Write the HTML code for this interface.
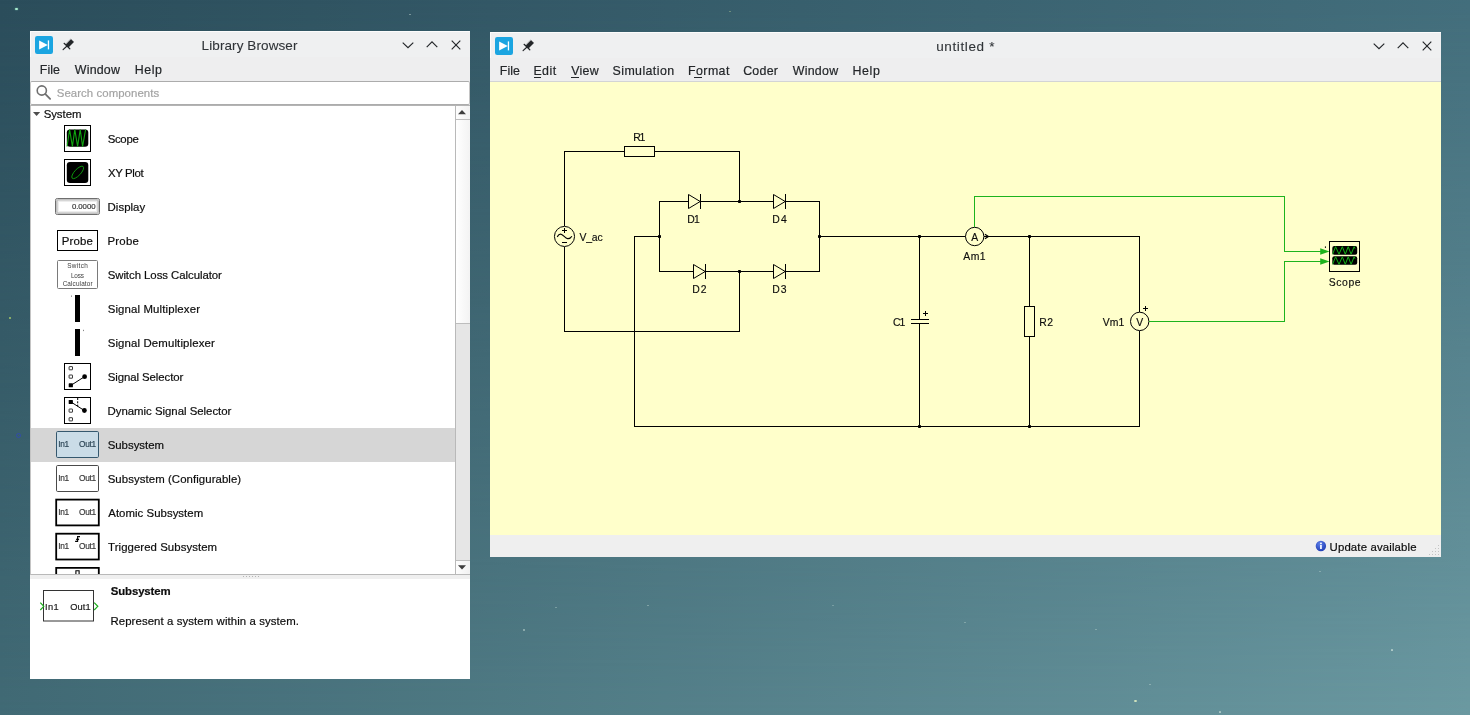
<!DOCTYPE html>
<html lang="en">
<head>
<meta charset="utf-8">
<title>PLECS - untitled</title>
<style>
html,body{margin:0;padding:0;}
body{width:1470px;height:715px;overflow:hidden;position:relative;font-family:"Liberation Sans",sans-serif;
  background:linear-gradient(to right,#2b4d5b,#436e7c);}
#bg2{position:absolute;left:0;top:0;width:1470px;height:715px;background:linear-gradient(to right,#416a75,#6b99a1);-webkit-mask-image:linear-gradient(to bottom,rgba(0,0,0,0),#000);mask-image:linear-gradient(to bottom,rgba(0,0,0,0),#000);}
.abs{position:absolute;}
.win{position:absolute;background:#eff0f1;}
.t{position:absolute;white-space:pre;line-height:20px;height:20px;font-family:"Liberation Sans",sans-serif;-webkit-text-stroke:0.2px currentColor;}
#texts{position:absolute;left:0;top:0;width:1470px;height:715px;pointer-events:none;will-change:transform;}
svg{position:absolute;left:0;top:0;overflow:visible;}
.star{position:absolute;border-radius:50%;background:#cfe3dc;}
</style>
</head>
<body>
<div id="bg2"></div>
<!-- desktop stars -->
<div class="star" style="left:15px;top:8px;width:3px;height:2.4px;background:#a9ecd0;box-shadow:0 0 1.5px #7fc9b0"></div>
<div class="star" style="left:409px;top:14px;width:2px;height:1.4px;opacity:.55"></div>
<div class="star" style="left:729px;top:11px;width:2px;height:1.4px;opacity:.45;background:#c8e0a0"></div>
<div class="star" style="left:9px;top:317px;width:2.4px;height:2.4px;opacity:.85;background:#b7dc6a"></div>
<div class="star" style="left:16px;top:433px;width:3px;height:3px;background:transparent;border:1px solid #2f49b8;opacity:.8"></div>
<div class="star" style="left:523px;top:629px;width:2px;height:1.6px;opacity:.6"></div>
<div class="star" style="left:555px;top:607px;width:1.6px;height:1.4px;opacity:.4"></div>
<div class="star" style="left:647px;top:605px;width:1.6px;height:1.4px;opacity:.45"></div>
<div class="star" style="left:832px;top:605px;width:1.6px;height:1.4px;opacity:.35"></div>
<div class="star" style="left:964px;top:622px;width:1.6px;height:1.4px;opacity:.4"></div>
<div class="star" style="left:1095px;top:629px;width:1.6px;height:1.4px;opacity:.4"></div>
<div class="star" style="left:1134px;top:700px;width:2.6px;height:2px;opacity:.85;background:#e4f2c4"></div>
<div class="star" style="left:1149px;top:684px;width:1.6px;height:1.4px;opacity:.45"></div>
<div class="star" style="left:1219px;top:711px;width:2.4px;height:2px;opacity:.7"></div>
<div class="star" style="left:1319px;top:571px;width:1.6px;height:1.4px;opacity:.4"></div>
<div class="star" style="left:1391px;top:649px;width:2.4px;height:2px;opacity:.75"></div>

<!-- ================= Library Browser window ================= -->
<div class="win" id="lib" style="left:30px;top:31px;width:440px;height:648px;">
  <div class="abs" id="lib-title" style="left:0;top:0;width:440px;height:26px;box-shadow:inset 0 1px 0 #fcfcfc,inset 1px 0 0 #fbfbfb;"></div>
  <div class="abs" id="lib-menu" style="left:0;top:26px;width:440px;height:24px;background:#eeeeef;"></div>
  <div class="abs" id="lib-search" style="left:0;top:50px;width:438px;height:22px;background:#fff;border:1px solid #acacac;border-left-color:#c4c4c4;border-right-color:#c4c4c4;border-radius:2px;"></div>
  <div class="abs" id="lib-tree" style="left:0;top:74px;width:440px;height:470px;background:#fff;border-left:1px solid #c4c4c4;border-top:1px solid #b4b4b4;border-bottom:1px solid #b9b9b9;box-sizing:border-box;overflow:hidden;">
  </div>
  <div class="abs" id="lib-sel" style="left:1px;top:397px;width:424px;height:34px;background:#d6d6d6;"></div>
  <!-- scrollbar -->
  <div class="abs" id="lib-sb" style="left:425px;top:75px;width:15px;height:468px;background:#e6e6e6;border-left:1px solid #b9b9b9;box-sizing:border-box;">
    <div class="abs" style="left:0;top:0;width:14px;height:13px;background:linear-gradient(90deg,#fdfdfd,#f1f1f1);border-bottom:1px solid #bdbdbd;"></div>
    <div class="abs" style="left:0;top:14px;width:14px;height:203px;background:linear-gradient(90deg,#ffffff,#f3f3f3);border-bottom:1px solid #bdbdbd;"></div>
    <div class="abs" style="left:0;top:454px;width:14px;height:13px;background:linear-gradient(90deg,#fdfdfd,#f1f1f1);border-top:1px solid #bdbdbd;"></div>
  </div>
  <div class="abs" id="lib-split" style="left:0;top:544px;width:440px;height:4px;background:#efefef;"></div>
  <div class="abs" id="lib-desc" style="left:0;top:548px;width:440px;height:100px;background:#fff;"></div>
</div>

<!-- ================= Model window ================= -->
<div class="win" id="mdl" style="left:490px;top:32px;width:951px;height:525px;">
  <div class="abs" id="mdl-title" style="left:0;top:0;width:951px;height:26px;box-shadow:inset 0 1px 0 #fcfcfc,inset 1px 0 0 #fbfbfb;"></div>
  <div class="abs" id="mdl-menu" style="left:0;top:26px;width:951px;height:23px;border-bottom:1px solid #d3d4d5;background:#eeeeef;"></div>
  <div class="abs" id="mdl-canvas" style="left:0;top:50px;width:951px;height:453px;background:#ffffcb;"></div>
  <div class="abs" id="mdl-status" style="left:0;top:503px;width:951px;height:22px;background:#efefef;"></div>
</div>

<svg width="1470" height="715" viewBox="0 0 1470 715">
<defs>
  <g id="appicon">
    <rect x="0" y="0" width="18" height="18" rx="2.2" fill="#1ba5e1"/>
    <path d="M4.1 4.6 L12.8 9 L4.1 13.4 Z" fill="#fff"/>
    <rect x="12.8" y="4.4" width="1.3" height="9" fill="#fff"/>
  </g>
  <g id="pin" fill="none" stroke="#232629" stroke-width="1.2" stroke-linecap="round">
    <!-- local coords: origin = icon centre -->
    <path d="M-1.3 1.2 L-5.2 4.8"/>
    <path d="M-4.2 -1.5 L1.5 4"/>
    <path d="M2.7 -5.6 L5.5 -2.8 L0.3 2.4 L-2.5 -0.4 Z" fill="#232629" stroke-width="0.3" stroke-linejoin="round"/>
  </g>
  <g id="wctl" fill="none" stroke="#232629" stroke-width="1.15">
    <!-- origin = centre of the minimise chevron -->
    <path d="M-5.3 -2.4 L0 2.7 L5.3 -2.4"/>
    <path d="M18.7 2.1 L24 -3.1 L29.3 2.1"/>
    <path d="M43.7 -4.3 L52.3 4.3 M52.3 -4.3 L43.7 4.3"/>
  </g>
  <g id="sbar-up"><path d="M0 4 L4 0 L8 4 Z" fill="#3c3c3c"/></g>
</defs>

<!-- ===== Library Browser chrome ===== -->
<use href="#appicon" x="35" y="36"/>
<use href="#pin" x="68.3" y="44.8"/>
<use href="#wctl" x="408" y="45"/>
<!-- search magnifier -->
<g fill="none" stroke="#707070" stroke-linecap="round">
  <circle cx="41.8" cy="90.5" r="4.6" stroke-width="1.6"/>
  <path d="M45.4 94.2 L50.1 98.9" stroke-width="1.8"/>
</g>
<!-- tree arrow -->
<path d="M33 112 L40.2 112 L36.6 116 Z" fill="#4d4d4d"/>
<!-- scrollbar arrows -->
<path d="M458 114.2 L462 110 L466 114.2 Z" fill="#3c3c3c"/>
<path d="M458 565.2 L466 565.2 L462 569.4 Z" fill="#3c3c3c"/>
<!-- splitter dots -->
<g fill="#b5b5b5">
  <rect x="243" y="576" width="1" height="1"/><rect x="246" y="576" width="1" height="1"/><rect x="249" y="576" width="1" height="1"/>
  <rect x="252" y="576" width="1" height="1"/><rect x="255" y="576" width="1" height="1"/><rect x="258" y="576" width="1" height="1"/>
</g>

<!-- ===== Library icons ===== -->
<!-- Scope -->
<rect x="64.5" y="125.5" width="26" height="26" fill="#fff" stroke="#000" stroke-width="1"/>
<rect x="66.8" y="129.4" width="21.5" height="17.3" rx="3.2" fill="#000"/>
<path d="M67 146.5 L69.6 129.7 L72.4 146.4 L74.8 129.7 L77.6 146.4 L80.2 129.7 L82.6 146.4 L85.6 129.5" fill="none" stroke="#10a410" stroke-width="1.1" stroke-linejoin="round"/>
<!-- XY Plot -->
<rect x="64.5" y="159.5" width="26" height="26" fill="#fff" stroke="#000" stroke-width="1"/>
<rect x="66.8" y="162" width="21.5" height="21" rx="3.2" fill="#000"/>
<ellipse cx="77.7" cy="172.4" rx="8" ry="3.1" transform="rotate(-47 77.7 172.4)" fill="none" stroke="#0c9a0c" stroke-width="0.9"/>
<!-- Display -->
<rect x="55.5" y="198.5" width="44" height="16" rx="1.8" fill="#fff" stroke="#6e6e6e" stroke-width="1"/>
<rect x="56.9" y="199.9" width="41.2" height="13.2" rx="1" fill="none" stroke="#c2c2c2" stroke-width="1.8"/>
<rect x="58.3" y="201.3" width="38.4" height="10.4" rx=".6" fill="none" stroke="#e9e9e9" stroke-width="1"/>
<!-- Probe -->
<rect x="57.5" y="230.5" width="40" height="20" fill="#fff" stroke="#000" stroke-width="1"/>
<!-- Switch loss calculator -->
<rect x="57.5" y="260.5" width="40" height="28" rx="1" fill="#fff" stroke="#7a7a7a" stroke-width="1"/>
<!-- mux / demux -->
<rect x="75" y="295" width="5" height="27" fill="#000"/>
<rect x="71" y="295.5" width="0.7" height="1.3" fill="#555"/>
<rect x="75" y="329" width="5" height="27" fill="#000"/>
<rect x="83.2" y="329.8" width="0.7" height="1.3" fill="#555"/>
<!-- Signal selector -->
<rect x="64.5" y="363.5" width="26" height="26" fill="#fff" stroke="#000" stroke-width="1"/>
<rect x="69.1" y="366.6" width="3.4" height="3.2" rx=".3" fill="#fff" stroke="#222" stroke-width=".9"/>
<rect x="69.1" y="375" width="3.4" height="3.2" rx=".3" fill="#fff" stroke="#222" stroke-width=".9"/>
<rect x="68.7" y="383.3" width="4.2" height="4" rx=".6" fill="#000"/>
<circle cx="84.6" cy="376.7" r="2.4" fill="#000"/>
<path d="M71 385.3 L84.5 376.7" stroke="#000" stroke-width="1" fill="none"/>
<!-- Dynamic signal selector -->
<rect x="64.5" y="397.5" width="26" height="26" fill="#fff" stroke="#000" stroke-width="1"/>
<rect x="68.7" y="400" width="4.2" height="4" rx=".6" fill="#000"/>
<rect x="69.1" y="409" width="3.4" height="3.2" rx=".3" fill="#fff" stroke="#222" stroke-width=".9"/>
<rect x="69.1" y="417.7" width="3.4" height="3.2" rx=".3" fill="#fff" stroke="#222" stroke-width=".9"/>
<circle cx="84.4" cy="410.5" r="2.4" fill="#000"/>
<path d="M71 402 L84.3 410.5" stroke="#000" stroke-width="1" fill="none"/>
<path d="M77.7 398 L77.7 406.5" stroke="#000" stroke-width="1" stroke-dasharray="2 1.3" fill="none"/>
<!-- Subsystem (selected) -->
<rect x="56.5" y="431.5" width="42" height="26" rx="1.2" fill="#cadce7" stroke="#35586e" stroke-width="1"/>
<!-- Subsystem (Configurable) -->
<rect x="56.5" y="465.5" width="42" height="26" rx="1.2" fill="#fff" stroke="#4a4a4a" stroke-width="1"/>
<!-- Atomic -->
<rect x="56.2" y="499.6" width="42.6" height="25.8" fill="#fff" stroke="#000" stroke-width="1.8"/>
<!-- Triggered -->
<rect x="56.2" y="533.7" width="42.6" height="25.8" fill="#fff" stroke="#000" stroke-width="1.8"/>
<path d="M75.1 541.4 L77.6 541.4 L77.6 536.6 L80 536.6 M76.3 539.9 L77.6 538.3 L78.9 539.9" fill="none" stroke="#000" stroke-width="1.1"/>
<!-- Enabled (partially visible) -->
<path d="M56.2 574 L56.2 567.8 L98.8 567.8 L98.8 574" fill="#fff" stroke="#000" stroke-width="1.8"/>
<path d="M75.9 574 L75.9 570.8 L79.1 570.8 L79.1 574" fill="none" stroke="#000" stroke-width="1.1"/>

<!-- description preview -->
<rect x="43.5" y="590.5" width="50" height="30.5" fill="#fff" stroke="#333" stroke-width="1"/>
<path d="M40.3 602.6 L43.8 606.3 L40.3 610" fill="none" stroke="#1cae1c" stroke-width="1.2"/>
<path d="M94.2 602.6 L97.8 606.3 L94.2 610" fill="none" stroke="#1cae1c" stroke-width="1.2"/>

<!-- ===== Model window chrome ===== -->
<use href="#appicon" x="495" y="37"/>
<use href="#pin" x="528.3" y="45.8"/>
<use href="#wctl" x="1379" y="46"/>
<!-- menu accelerators -->
<g stroke="#232629" stroke-width="1" shape-rendering="crispEdges">
  <path d="M534.2 77.5 H540.8 M571.2 77.5 H578.8 M694.4 77.5 H701.6"/>
</g>
<!-- status bar -->
<defs>
  <radialGradient id="infog" cx="40%" cy="30%" r="75%"><stop offset="0" stop-color="#5d7fe8"/><stop offset="1" stop-color="#1f3cb4"/></radialGradient>
</defs>
<circle cx="1320.9" cy="546" r="5.2" fill="url(#infog)"/>
<rect x="1320.1" y="545" width="1.7" height="4" fill="#fff"/>
<rect x="1320.1" y="542.6" width="1.7" height="1.6" fill="#fff"/>
<g fill="#c4c4c4">
  <rect x="1438" y="545" width="1" height="1"/>
  <rect x="1435" y="548" width="1" height="1"/><rect x="1438" y="548" width="1" height="1"/>
  <rect x="1432" y="551" width="1" height="1"/><rect x="1435" y="551" width="1" height="1"/><rect x="1438" y="551" width="1" height="1"/>
  <rect x="1429" y="554" width="1" height="1"/><rect x="1432" y="554" width="1" height="1"/><rect x="1435" y="554" width="1" height="1"/><rect x="1438" y="554" width="1" height="1"/>
</g>

<!-- ===== Circuit ===== -->
<g fill="none" stroke="#000" stroke-width="1" shape-rendering="crispEdges">
  <!-- source loop -->
  <path d="M564.5 226 V151.5 H624.5"/>
  <path d="M654.5 151.5 H739.5 V201.5"/>
  <path d="M564.5 247 V331.5 H739.5 V271.5"/>
  <!-- bridge -->
  <path d="M659.5 201.5 H819.5 V271.5 H659.5 Z"/>
  <!-- negative rail -->
  <path d="M659.5 236.5 H634.5 V426.5 H1139.5 V331"/>
  <!-- positive rail -->
  <path d="M819.5 236.5 H965.5 M984 236.5 H1139.5 V312"/>
  <!-- C1 branch -->
  <path d="M919.5 236.5 V319.5 M919.5 323.5 V426.5"/>
  <path d="M911 319.5 H928.5 M911 323.5 H928.5"/>
  <path d="M923 313.5 H928 M925.5 311 V316"/>
  <!-- R2 branch -->
  <path d="M1029.5 236.5 V306.5 M1029.5 336.5 V426.5"/>
  <!-- resistors -->
  <rect x="624.5" y="146.5" width="30" height="10" fill="#ffffcb"/>
  <rect x="1024.5" y="306.5" width="10" height="30" fill="#ffffcb"/>
  <!-- Vm1 plus -->
  <path d="M1142.5 308.5 H1147.5 M1145 306 V311"/>
</g>
<!-- diodes -->
<g fill="#ffffcb" stroke="#000" stroke-width="1" stroke-linejoin="miter">
  <path d="M688.5 194.5 L700.2 201.5 L688.5 208.5 Z"/>
  <path d="M773.5 194.5 L785.2 201.5 L773.5 208.5 Z"/>
  <path d="M693.5 264.5 L705.2 271.5 L693.5 278.5 Z"/>
  <path d="M773.5 264.5 L785.2 271.5 L773.5 278.5 Z"/>
</g>
<g fill="none" stroke="#000" stroke-width="1" shape-rendering="crispEdges">
  <path d="M700.5 194 V209 M785.5 194 V209 M705.5 264 V279 M785.5 264 V279"/>
</g>
<!-- junction dots -->
<g fill="#000">
  <rect x="738" y="200" width="3" height="3" rx=".7"/><rect x="738" y="270" width="3" height="3" rx=".7"/>
  <rect x="658" y="235" width="3" height="3" rx=".7"/><rect x="818" y="235" width="3" height="3" rx=".7"/>
  <rect x="918" y="235" width="3" height="3" rx=".7"/><rect x="1028" y="235" width="3" height="3" rx=".7"/>
  <rect x="918" y="425" width="3" height="3" rx=".7"/><rect x="1028" y="425" width="3" height="3" rx=".7"/>
</g>
<!-- V_ac source -->
<g fill="none" stroke="#000" stroke-width="1">
  <circle cx="564.5" cy="236.45" r="10.05" fill="#ffffcb"/>
  <path d="M557.2 236.9 C558.6 234.5 560.2 233.8 561.6 234.4 C563.8 235.3 565.2 238.3 567.6 238.6 C569.6 238.8 571 237.7 571.9 236.2" stroke-width="1.1"/>
</g>
<g fill="none" stroke="#000" stroke-width="1" shape-rendering="crispEdges">
  <path d="M562 230.5 H567 M564.5 228 V233 M562 242.5 H567"/>
</g>
<!-- meters -->
<g fill="#ffffcb" stroke="#000" stroke-width="1">
  <circle cx="974.7" cy="236.5" r="9.2"/>
  <circle cx="1139.7" cy="321.4" r="9.2"/>
  <path d="M984.9 234.2 L988.5 236.5 L984.9 238.8" fill="none" stroke-width="1.15"/>
</g>
<!-- signal wires -->
<g fill="none" stroke="#1db31d" stroke-width="1" shape-rendering="crispEdges">
  <path d="M974.5 227 V196.5 H1284.5 V251.5 H1321"/>
  <path d="M1149 321.5 H1284.5 V261.5 H1321"/>
</g>
<path d="M1320.2 248.2 L1329.5 251.5 L1320.2 254.8 Z M1320.2 258.2 L1329.5 261.5 L1320.2 264.8 Z" fill="#1db31d"/>
<rect x="1324.9" y="246.4" width="1.1" height="1.5" fill="#111"/>
<!-- Scope block -->
<rect x="1329.5" y="241.5" width="30" height="30" fill="#ffffcb" stroke="#000" stroke-width="1"/>
<rect x="1332.3" y="246.1" width="24.9" height="8.6" rx="2" fill="#000"/>
<rect x="1332.3" y="256.2" width="24.9" height="8.6" rx="2" fill="#000"/>
<g fill="none" stroke="#14b014" stroke-width="1" stroke-linejoin="round">
  <path d="M1332.5 254.3 L1335.6 246.7 L1339 254.2 L1342.3 246.7 L1345.3 254.2 L1348.2 246.7 L1351.1 254.2 L1354.1 246.7 L1355 248.6"/>
  <path d="M1332.5 264.4 L1335.6 256.8 L1339 264.3 L1342.3 256.8 L1345.3 264.3 L1348.2 256.8 L1351.1 264.3 L1354.1 256.8 L1355 258.7"/>
</g>
</svg>


<div id="texts">
<span class="t" style="left:201.61px;top:36.00px;font-size:13.5px;letter-spacing:0.092px;color:#2f3337;-webkit-text-stroke-width:0.1px;">Library Browser</span>
<span class="t" style="left:39.74px;top:60.00px;font-size:12.4px;letter-spacing:0.075px;color:#232629;">File</span>
<span class="t" style="left:74.85px;top:60.00px;font-size:12.4px;letter-spacing:0.192px;color:#232629;">Window</span>
<span class="t" style="left:134.73px;top:60.00px;font-size:12.4px;letter-spacing:0.577px;color:#232629;">Help</span>
<span class="t" style="left:56.77px;top:83.00px;font-size:11.4px;letter-spacing:0.064px;color:#a3a3a3;">Search components</span>
<span class="t" style="left:43.64px;top:104.00px;font-size:11.4px;letter-spacing:-0.032px;color:#0d0d0d;">System</span>
<span class="t" style="left:107.69px;top:129.00px;font-size:11.4px;letter-spacing:-0.303px;color:#0d0d0d;">Scope</span>
<span class="t" style="left:107.94px;top:163.00px;font-size:11.4px;letter-spacing:-0.356px;color:#0d0d0d;">XY Plot</span>
<span class="t" style="left:107.60px;top:197.00px;font-size:11.4px;letter-spacing:0.038px;color:#0d0d0d;">Display</span>
<span class="t" style="left:107.49px;top:231.00px;font-size:11.4px;letter-spacing:0.235px;color:#0d0d0d;">Probe</span>
<span class="t" style="left:107.67px;top:265.00px;font-size:11.4px;letter-spacing:-0.046px;color:#0d0d0d;">Switch Loss Calculator</span>
<span class="t" style="left:107.65px;top:299.00px;font-size:11.4px;letter-spacing:0.141px;color:#0d0d0d;">Signal Multiplexer</span>
<span class="t" style="left:107.67px;top:333.00px;font-size:11.4px;letter-spacing:0.141px;color:#0d0d0d;">Signal Demultiplexer</span>
<span class="t" style="left:107.67px;top:367.00px;font-size:11.4px;letter-spacing:-0.066px;color:#0d0d0d;">Signal Selector</span>
<span class="t" style="left:107.49px;top:401.00px;font-size:11.4px;letter-spacing:-0.009px;color:#0d0d0d;">Dynamic Signal Selector</span>
<span class="t" style="left:107.67px;top:435.00px;font-size:11.4px;letter-spacing:0.012px;color:#0d0d0d;">Subsystem</span>
<span class="t" style="left:107.65px;top:469.00px;font-size:11.4px;letter-spacing:0.080px;color:#0d0d0d;">Subsystem (Configurable)</span>
<span class="t" style="left:108.25px;top:503.00px;font-size:11.4px;letter-spacing:0.040px;color:#0d0d0d;">Atomic Subsystem</span>
<span class="t" style="left:108.09px;top:537.00px;font-size:11.4px;letter-spacing:0.064px;color:#0d0d0d;">Triggered Subsystem</span>
<span class="t" style="left:71.94px;top:197.00px;font-size:7.8px;letter-spacing:-0.058px;color:#3a3a3a;">0.0000</span>
<span class="t" style="left:61.76px;top:231.00px;font-size:11.4px;letter-spacing:0.191px;color:#0d0d0d;">Probe</span>
<span class="t" style="left:67.20px;top:256.00px;font-size:6.4px;letter-spacing:0.368px;color:#3c3c3c;-webkit-text-stroke-width:0px;">Switch</span>
<span class="t" style="left:70.95px;top:266.00px;font-size:6.4px;letter-spacing:-0.198px;color:#3c3c3c;-webkit-text-stroke-width:0px;">Loss</span>
<span class="t" style="left:62.63px;top:274.00px;font-size:6.4px;letter-spacing:0.129px;color:#3c3c3c;-webkit-text-stroke-width:0px;">Calculator</span>
<span class="t" style="left:58.31px;top:434.00px;font-size:8.3px;letter-spacing:-0.377px;color:#2f4858;">In1</span>
<span class="t" style="left:79.05px;top:434.00px;font-size:8.3px;letter-spacing:-0.317px;color:#2f4858;">Out1</span>
<span class="t" style="left:58.31px;top:468.00px;font-size:8.3px;letter-spacing:-0.377px;color:#3a3a3a;">In1</span>
<span class="t" style="left:79.05px;top:468.00px;font-size:8.3px;letter-spacing:-0.317px;color:#3a3a3a;">Out1</span>
<span class="t" style="left:58.31px;top:502.00px;font-size:8.3px;letter-spacing:-0.377px;color:#3a3a3a;">In1</span>
<span class="t" style="left:79.05px;top:502.00px;font-size:8.3px;letter-spacing:-0.317px;color:#3a3a3a;">Out1</span>
<span class="t" style="left:58.31px;top:536.00px;font-size:8.3px;letter-spacing:-0.377px;color:#3a3a3a;">In1</span>
<span class="t" style="left:79.05px;top:536.00px;font-size:8.3px;letter-spacing:-0.317px;color:#3a3a3a;">Out1</span>
<span class="t" style="left:110.84px;top:581.00px;font-size:11.4px;letter-spacing:-0.131px;color:#0d0d0d;font-weight:bold;">Subsystem</span>
<span class="t" style="left:110.45px;top:611.00px;font-size:11.4px;letter-spacing:0.090px;color:#0d0d0d;">Represent a system within a system.</span>
<span class="t" style="left:45.12px;top:597.00px;font-size:9.3px;letter-spacing:0.277px;color:#222;">In1</span>
<span class="t" style="left:70.35px;top:597.00px;font-size:9.3px;letter-spacing:0.035px;color:#222;">Out1</span>
<span class="t" style="left:936.14px;top:37.00px;font-size:13.5px;letter-spacing:0.638px;color:#2f3337;-webkit-text-stroke-width:0.1px;">untitled *</span>
<span class="t" style="left:499.74px;top:61.00px;font-size:12.4px;letter-spacing:0.075px;color:#232629;">File</span>
<span class="t" style="left:533.41px;top:61.00px;font-size:12.4px;letter-spacing:0.441px;color:#232629;">Edit</span>
<span class="t" style="left:571.18px;top:61.00px;font-size:12.4px;letter-spacing:0.264px;color:#232629;">View</span>
<span class="t" style="left:612.55px;top:61.00px;font-size:12.4px;letter-spacing:0.409px;color:#232629;">Simulation</span>
<span class="t" style="left:688.07px;top:61.00px;font-size:12.4px;letter-spacing:0.410px;color:#232629;">Format</span>
<span class="t" style="left:743.13px;top:61.00px;font-size:12.4px;letter-spacing:0.270px;color:#232629;">Coder</span>
<span class="t" style="left:792.72px;top:61.00px;font-size:12.4px;letter-spacing:0.268px;color:#232629;">Window</span>
<span class="t" style="left:852.44px;top:61.00px;font-size:12.4px;letter-spacing:0.674px;color:#232629;">Help</span>
<span class="t" style="left:1329.55px;top:537.00px;font-size:11.4px;letter-spacing:0.144px;color:#0d0d0d;">Update available</span>
<span class="t" style="left:633.27px;top:128.00px;font-size:10.4px;letter-spacing:-1.265px;color:#0d0d0d;-webkit-text-stroke-width:0.15px;">R1</span>
<span class="t" style="left:687.27px;top:210.00px;font-size:10.4px;letter-spacing:-0.794px;color:#0d0d0d;-webkit-text-stroke-width:0.15px;">D1</span>
<span class="t" style="left:772.27px;top:210.00px;font-size:10.4px;letter-spacing:1.130px;color:#0d0d0d;-webkit-text-stroke-width:0.15px;">D4</span>
<span class="t" style="left:692.27px;top:280.00px;font-size:10.4px;letter-spacing:0.951px;color:#0d0d0d;-webkit-text-stroke-width:0.15px;">D2</span>
<span class="t" style="left:772.27px;top:280.00px;font-size:10.4px;letter-spacing:0.951px;color:#0d0d0d;-webkit-text-stroke-width:0.15px;">D3</span>
<span class="t" style="left:579.46px;top:228.00px;font-size:10.4px;letter-spacing:-0.177px;color:#0d0d0d;-webkit-text-stroke-width:0.15px;">V_ac</span>
<span class="t" style="left:963.21px;top:247.00px;font-size:10.4px;letter-spacing:0.494px;color:#0d0d0d;-webkit-text-stroke-width:0.15px;">Am1</span>
<span class="t" style="left:893.11px;top:313.00px;font-size:10.4px;letter-spacing:-1.227px;color:#0d0d0d;-webkit-text-stroke-width:0.15px;">C1</span>
<span class="t" style="left:1039.27px;top:313.00px;font-size:10.4px;letter-spacing:0.448px;color:#0d0d0d;-webkit-text-stroke-width:0.15px;">R2</span>
<span class="t" style="left:1102.80px;top:313.00px;font-size:10.4px;letter-spacing:0.033px;color:#0d0d0d;-webkit-text-stroke-width:0.15px;">Vm1</span>
<span class="t" style="left:1328.83px;top:273.00px;font-size:10.4px;letter-spacing:0.556px;color:#0d0d0d;-webkit-text-stroke-width:0.15px;">Scope</span>
<span class="t" style="left:971.29px;top:228.00px;font-size:10.4px;letter-spacing:0.000px;color:#0d0d0d;-webkit-text-stroke-width:0.15px;">A</span>
<span class="t" style="left:1136.34px;top:313.00px;font-size:10.4px;letter-spacing:0.000px;color:#0d0d0d;-webkit-text-stroke-width:0.15px;">V</span>
</div>
</body>
</html>
